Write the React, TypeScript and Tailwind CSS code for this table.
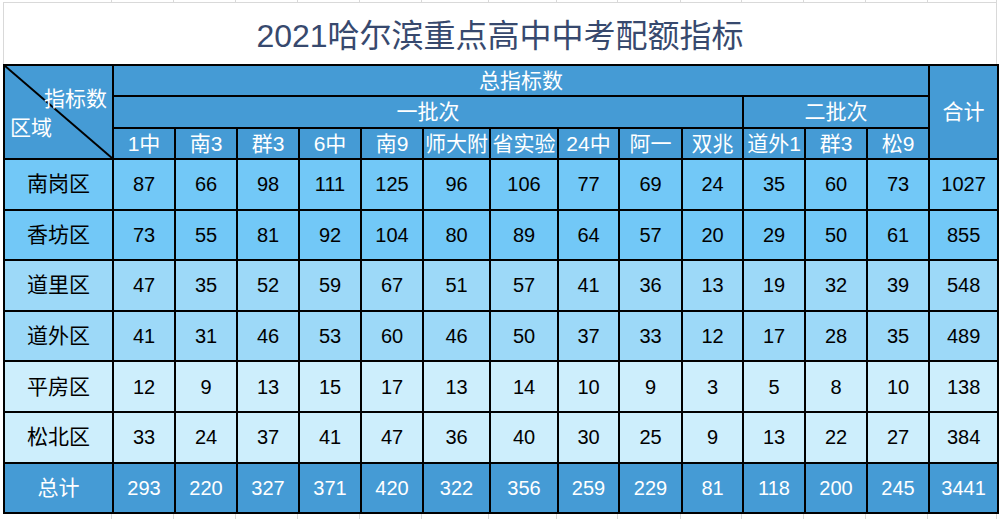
import React from 'react';

const colWidths = [109, 62, 62, 62, 62, 62, 67, 68, 61, 63, 61, 62, 62, 62, 69];

const schools = ['1中', '南3', '群3', '6中', '南9', '师大附', '省实验', '24中', '阿一', '双兆', '道外1', '群3', '松9'];

const rows: { name: string; values: number[]; total: number; bg: string }[] = [
  { name: '南岗区', values: [87, 66, 98, 111, 125, 96, 106, 77, 69, 24, 35, 60, 73], total: 1027, bg: 'bg-[#72c8f7]' },
  { name: '香坊区', values: [73, 55, 81, 92, 104, 80, 89, 64, 57, 20, 29, 50, 61], total: 855, bg: 'bg-[#72c8f7]' },
  { name: '道里区', values: [47, 35, 52, 59, 67, 51, 57, 41, 36, 13, 19, 32, 39], total: 548, bg: 'bg-[#9dd9f8]' },
  { name: '道外区', values: [41, 31, 46, 53, 60, 46, 50, 37, 33, 12, 17, 28, 35], total: 489, bg: 'bg-[#9dd9f8]' },
  { name: '平房区', values: [12, 9, 13, 15, 17, 13, 14, 10, 9, 3, 5, 8, 10], total: 138, bg: 'bg-[#cdeefc]' },
  { name: '松北区', values: [33, 24, 37, 41, 47, 36, 40, 30, 25, 9, 13, 22, 27], total: 384, bg: 'bg-[#cdeefc]' },
];

const totals = [293, 220, 327, 371, 420, 322, 356, 259, 229, 81, 118, 200, 245];

const font = { fontFamily: '"Liberation Sans", "Noto Sans CJK SC", sans-serif' };

// spreadsheet gridlines peeking out above and below the table
const GridStrip: React.FC<{ height: string; bottomLine?: boolean }> = ({ height, bottomLine }) => (
  <div className={`flex ${height} ${bottomLine ? 'border-b border-[#d9d9d9]' : ''}`}>
    {colWidths.map((w, i) => (
      <div key={i} className="border-r border-[#d9d9d9] shrink-0" style={{ width: w }} />
    ))}
  </div>
);

export default function App() {
  const th = 'border-2 border-black text-white text-[21px] leading-[22px] font-normal p-0 text-center whitespace-nowrap overflow-hidden';
  const td = 'border-2 border-black text-black text-[20px] leading-[24px] p-0 text-center';

  return (
    <div className="w-[1000px] h-[519px] bg-white overflow-hidden" style={font}>
      <div className="ml-[3px] w-[994px]">
        <GridStrip height="h-[3px]" bottomLine />
        <div className="h-[61px] border-l border-r border-[#d9d9d9] flex items-center justify-center">
          <span className="text-[32px] text-[#37496e] leading-none pt-[4px]">2021哈尔滨重点高中中考配额指标</span>
        </div>
        <table className="table-fixed border-collapse w-[994px] bg-[#459bd5]">
          <colgroup>
            {colWidths.map((w, i) => (
              <col key={i} style={{ width: w }} />
            ))}
          </colgroup>
          <thead>
            <tr className="h-[31px]">
              <th rowSpan={3} className="border-2 border-black p-0 relative text-white text-[21px] font-normal">
                <svg className="absolute inset-0 w-full h-full" viewBox="0 0 100 100" preserveAspectRatio="none">
                  <line x1="0" y1="0" x2="100" y2="100" stroke="black" strokeWidth="2" vectorEffect="non-scaling-stroke" />
                </svg>
                <div className="relative flex flex-col leading-[29px] pt-[6px] pb-[4px]">
                  <span className="self-end pr-[5px]">指标数</span>
                  <span className="self-start pl-[5px]">区域</span>
                </div>
              </th>
              <th colSpan={13} className={th}>总指标数</th>
              <th rowSpan={3} className={th}>合计</th>
            </tr>
            <tr className="h-[32px]">
              <th colSpan={10} className={th}>一批次</th>
              <th colSpan={3} className={th}>二批次</th>
            </tr>
            <tr className="h-[31px]">
              {schools.map((s, i) => (
                <th key={i} className={th}>{s}</th>
              ))}
            </tr>
          </thead>
          <tbody>
            {rows.map((r) => (
              <tr key={r.name} className={`h-[50.6px] ${r.bg}`}>
                <td className={`${td} text-[21px]`}>{r.name}</td>
                {r.values.map((v, i) => (
                  <td key={i} className={td}>{v}</td>
                ))}
                <td className={td}>{r.total}</td>
              </tr>
            ))}
            <tr className="h-[50.6px] bg-[#459bd5]">
              <td className={`${td} text-white text-[21px]`}>总计</td>
              {totals.map((v, i) => (
                <td key={i} className={`${td} text-white`}>{v}</td>
              ))}
              <td className={`${td} text-white`}>3441</td>
            </tr>
          </tbody>
        </table>
        <GridStrip height="h-[6px]" />
      </div>
    </div>
  );
}
